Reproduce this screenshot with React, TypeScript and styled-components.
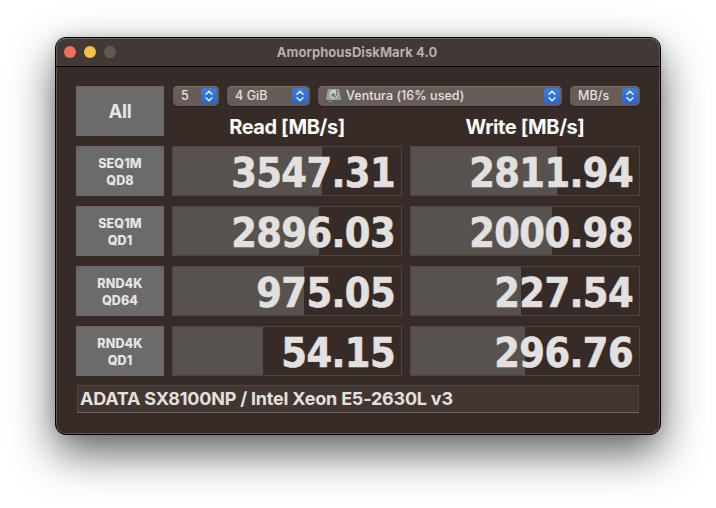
import React from "react";
import styled, { createGlobalStyle } from "styled-components";

const GlobalStyle = createGlobalStyle`
  * { box-sizing: border-box; }
  html, body { margin: 0; background: #fff; overflow: hidden; }
`;

const Desktop = styled.div`
  width: 716px;
  height: 508px;
  padding: 37px 55px;
  overflow: hidden;
  background: #fff;
  font-family: Inter, "Liberation Sans", sans-serif;
`;

const Window = styled.main`
  width: 606px;
  height: 398px;
  border: 1px solid #000;
  border-radius: 11px;
  background: #372b27;
  box-shadow: inset 0 0 0 1px #5f5652, 0 18px 44px rgba(0, 0, 0, 0.62), 0 0 12px rgba(0, 0, 0, 0.12);
`;

const TitleBar = styled.header`
  display: grid;
  grid-template-columns: 120px 1fr 120px;
  align-items: center;
  height: 29px;
  padding-bottom: 1px;
  border-bottom: 1px solid #000;
  border-radius: 10px 10px 0 0;
  background: #423835;
  box-shadow: inset 0 1px 0 #6f6663, inset 1px 0 0 #5f5652, inset -1px 0 0 #5f5652;
`;

const Lights = styled.div`
  display: flex;
  gap: 8px;
  padding-left: 8px;
`;

const Light = styled.span<{ $color: string }>`
  width: 12px;
  height: 12px;
  border-radius: 50%;
  background: ${(p) => p.$color};
`;

const Title = styled.h1`
  margin: 0;
  padding-right: 2px;
  text-align: center;
  font-size: 13px;
  line-height: 16px;
  font-weight: 700;
  letter-spacing: 0.07px;
  color: #b5afad;
  white-space: nowrap;
`;

const Content = styled.div`
  padding: 19px 20px 0;
`;

const Top = styled.section`
  display: grid;
  grid-template-columns: 88px 467px;
  column-gap: 9px;
  height: 50px;
`;

const RunButton = styled.button<{ $large?: boolean }>`
  width: 88px;
  height: 50px;
  padding: ${(p) => (p.$large ? "1px 0 0" : "1px 0 0")};
  border: 1px solid #706660;
  background: #6b6b6b;
  color: #e6e5e5;
  font-family: inherit;
  font-size: ${(p) => (p.$large ? "18.5px" : "12.5px")};
  font-weight: ${(p) => (p.$large ? 700 : 800)};
  line-height: 17px;
  letter-spacing: ${(p) => (p.$large ? "-0.25px" : "0.12px")};
  white-space: pre-line;
`;

const Selects = styled.div`
  display: flex;
  gap: 8px;
`;

const SelectBox = styled.div<{ $width: number }>`
  display: flex;
  align-items: center;
  width: ${(p) => p.$width}px;
  height: 20px;
  padding: 0 2px 0 8px;
  border-radius: 5px;
  background: #675d58;
  box-shadow: inset 0 1px 0 #79706b, 0 1px 1px rgba(0, 0, 0, 0.25);
  color: #e4e1df;
  font-size: 12.5px;
  font-weight: 500;
  line-height: 20px;
  white-space: nowrap;
`;

const SelectText = styled.span`
  flex: 1;
  letter-spacing: 0.05px;
`;

const Stepper = styled.span`
  width: 16px;
  height: 16px;
  border-radius: 4px;
  background: linear-gradient(#3a7de4, #2865cb);
  svg { display: block; }
`;

const DiskSvg = styled.svg`
  margin-right: 5px;
`;

const Headings = styled.div`
  display: grid;
  grid-template-columns: 230px 230px;
  gap: 8px;
  margin-left: -1px;
  height: 30px;
`;

const Heading = styled.h2`
  margin: 0;
  padding-top: 9px;
  text-align: center;
  font-size: 20px;
  line-height: 24px;
  font-weight: 700;
  letter-spacing: -0.42px;
  color: #fff;
`;

const Results = styled.section`
  display: grid;
  gap: 10px;
  margin-top: 10px;
`;

const ResultRow = styled.div`
  display: grid;
  grid-template-columns: 88px 230px 230px;
  gap: 8px;
`;

const Score = styled.div<{ $fill: number }>`
  display: flex;
  justify-content: flex-end;
  height: 50px;
  padding: 0 6px 0 0;
  border: 1px solid #4e433f;
  background: linear-gradient(#57524e, #57524e) left / ${(p) => p.$fill}px 100% no-repeat #372b27;
  color: #e2e1e0;
  -webkit-text-stroke: 0.6px #e2e1e0;
  font-family: "DejaVu Sans Condensed", "DejaVu Sans", sans-serif;
  font-stretch: condensed;
  font-weight: 700;
  font-size: 41px;
  line-height: 52px;
  letter-spacing: -0.6px;
`;

const Note = styled.footer`
  width: 562px;
  height: 28px;
  margin: 9px 0 0 1px;
  padding-left: 2px;
  border: 1px solid #51463f;
  border-bottom-color: #6f6561;
  background: #423632;
  color: #e2e0df;
  font-size: 18px;
  font-weight: 700;
  line-height: 26px;
  letter-spacing: -0.22px;
  white-space: nowrap;
`;

const DiskIcon = () => (
  <DiskSvg width="15" height="16" viewBox="0 0 15 16">
    <path d="M2 1h11l2 11v3H0v-3z" fill="#a9afb0" />
    <path d="M0 12h15v3H0z" fill="#555c60" />
    <path d="M2.3 1.5h10.4L14 11.5H1z" fill="#939a9c" />
    <ellipse cx="7.7" cy="6.2" rx="4.4" ry="4.5" fill="#c8cdcd" />
    <ellipse cx="7.2" cy="7" rx="2" ry="2" fill="#737c80" />
    <path d="M10.7 2.2v5L8.5 10" stroke="#596267" fill="none" />
    <path d="M2 13.5h5" stroke="#858c8f" />
  </DiskSvg>
);

type SelectProps = { width: number; label: string; disk?: boolean };

const Select = ({ width, label, disk }: SelectProps) => (
  <SelectBox $width={width}>
    {disk && <DiskIcon />}
    <SelectText>{label}</SelectText>
    <Stepper>
      <svg width="16" height="16" viewBox="0 0 16 16" fill="none" stroke="#e9effb" strokeWidth="1.5" strokeLinecap="round" strokeLinejoin="round">
        <path d="M5 6.2 8 3.3l3 2.9M5 9.8l3 2.9 3-2.9" />
      </svg>
    </Stepper>
  </SelectBox>
);

const tests = [
  { name: "SEQ1M\nQD8", read: "3547.31", readFill: 149, write: "2811.94", writeFill: 146 },
  { name: "SEQ1M\nQD1", read: "2896.03", readFill: 146, write: "2000.98", writeFill: 141 },
  { name: "RND4K\nQD64", read: "975.05", readFill: 131, write: "227.54", writeFill: 110 },
  { name: "RND4K\nQD1", read: "54.15", readFill: 90, write: "296.76", writeFill: 114 },
];

export default function App() {
  return (
    <>
      <GlobalStyle />
      <Desktop>
        <Window>
          <TitleBar>
            <Lights>
              <Light $color="#ee6f5c" />
              <Light $color="#f5bf43" />
              <Light $color="#625955" />
            </Lights>
            <Title>AmorphousDiskMark 4.0</Title>
          </TitleBar>
          <Content>
            <Top>
              <RunButton $large>All</RunButton>
              <div>
                <Selects>
                  <Select width={46} label="5" />
                  <Select width={83} label="4 GiB" />
                  <Select width={244} label="Ventura (16% used)" disk />
                  <Select width={70} label="MB/s" />
                </Selects>
                <Headings>
                  <Heading>Read [MB/s]</Heading>
                  <Heading>Write [MB/s]</Heading>
                </Headings>
              </div>
            </Top>
            <Results>
              {tests.map((t) => (
                <ResultRow key={t.name}>
                  <RunButton>{t.name}</RunButton>
                  <Score $fill={t.readFill}>{t.read}</Score>
                  <Score $fill={t.writeFill}>{t.write}</Score>
                </ResultRow>
              ))}
            </Results>
            <Note>ADATA SX8100NP / Intel Xeon E5-2630L v3</Note>
          </Content>
        </Window>
      </Desktop>
    </>
  );
}
